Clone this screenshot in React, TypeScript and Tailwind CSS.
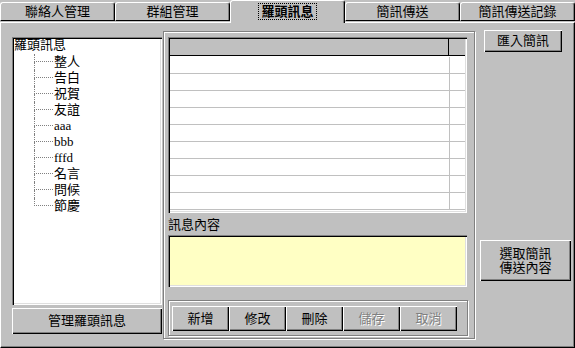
import React from 'react';

const raised = 'shadow-[inset_1px_1px_0_#fff,inset_-1px_-1px_0_#000,inset_-2px_-2px_0_#808080]';
const sunken = 'shadow-[inset_1px_1px_0_#808080,inset_2px_2px_0_#000,inset_-1px_-1px_0_#fff,inset_-2px_-2px_0_#dfdfdf]';
const etched = 'border border-[#808080] shadow-[inset_1px_1px_0_#fff,1px_1px_0_#fff]';

const tabs = ['聯絡人管理', '群組管理', '羅頭訊息', '簡訊傳送', '簡訊傳送記錄'];
const treeItems = ['整人', '告白', '祝賀', '友誼', 'aaa', 'bbb', 'fffd', '名言', '問候', '節慶'];
const actions = [
    { label: '新增', disabled: false },
    { label: '修改', disabled: false },
    { label: '刪除', disabled: false },
    { label: '儲存', disabled: true },
    { label: '取消', disabled: true },
];

const Tab = ({ label, active }: { label: string; active: boolean }) =>
    active ? (
        <div className="relative z-10 flex h-[23px] w-[115px] items-start justify-center rounded-t-[3px] border-t border-l border-r border-white border-r-black bg-[#c0c0c0] pt-[3px] shadow-[inset_-1px_0_0_#808080]">
            <span className="px-[2px] font-bold leading-[15px] outline-1 outline-dotted outline-black">{label}</span>
        </div>
    ) : (
        <div className="mt-[2px] flex h-[19px] w-[115px] items-center justify-center rounded-t-[3px] border border-white border-r-black border-b-black shadow-[inset_-1px_0_0_#808080]">
            {label}
        </div>
    );

const TreeRow = ({ label, last }: { label: string; last: boolean }) => (
    <div className="flex h-4 items-center">
        <div className="ml-[20px] flex w-[19px] flex-col self-stretch">
            <div className="h-[8px] border-b border-l border-dotted border-[#808080]" />
            <div className={last ? 'flex-1' : 'flex-1 border-l border-dotted border-[#808080]'} />
        </div>
        <span className="pl-[1px] leading-4">{label}</span>
    </div>
);

export default function App() {
    return (
        <div className="h-[348px] w-[575px] overflow-hidden bg-[#c0c0c0] font-['Liberation_Serif','Noto_Sans_CJK_TC',serif] text-[13px] text-black">
            {/* tab strip */}
            <div className="flex h-[22px] items-start">
                {tabs.map((t, i) => (
                    <Tab key={t} label={t} active={i === 2} />
                ))}
            </div>

            {/* page */}
            <div className="flex h-[326px] items-start border-t border-l border-r border-b border-white border-r-black border-b-black pl-[11px] shadow-[inset_-1px_-1px_0_#808080]">
                {/* tree column */}
                <div className="mt-[14px] flex w-[150px] flex-col">
                    <div className={`h-[268px] bg-white px-[2px] pt-[1px] ${sunken}`}>
                        <div className="h-[14px] leading-[14px]">羅頭訊息</div>
                        <div className="mt-[2px]">
                            {treeItems.map((t, i) => (
                                <TreeRow key={t} label={t} last={i === treeItems.length - 1} />
                            ))}
                        </div>
                    </div>
                    <button className={`mt-[3px] h-[26px] w-[150px] bg-[#c0c0c0] ${raised}`}>管理羅頭訊息</button>
                </div>

                {/* message column */}
                <div className={`ml-[1px] mt-[8px] h-[308px] w-[312px] pl-[4px] pt-[5px] ${etched}`}>
                    <div className={`h-[176px] w-[299px] bg-white p-[2px] ${sunken}`}>
                        <div className="flex h-[17px] border-b border-black bg-[#c0c0c0]">
                            <div className="w-[279px] border-r border-black" />
                            <div className="flex-1" />
                        </div>
                        <div className="pt-px">
                            {Array.from({ length: 9 }).map((_, i) => (
                                <div key={i} className="flex h-[17px] border-b border-[#c0c0c0]">
                                    <div className="w-[280px] border-r border-[#c0c0c0]" />
                                    <div className="flex-1" />
                                </div>
                            ))}
                        </div>
                    </div>
                    <div className="mt-[4px] h-4 leading-4">訊息內容</div>
                    <div className={`mt-[2px] h-[52px] w-[299px] bg-[#ffffc4] ${sunken}`} />
                    <div className={`mt-[13px] flex h-[36px] w-[300px] pl-[3px] pt-[5px] ${etched}`}>
                        {actions.map((a) => (
                            <button
                                key={a.label}
                                className={`h-[25px] w-[57px] bg-[#c0c0c0] ${raised} ${a.disabled ? 'text-[#808080] [text-shadow:1px_1px_0_#fff]' : ''}`}
                            >
                                {a.label}
                            </button>
                        ))}
                    </div>
                </div>

                {/* right buttons */}
                <div className="flex w-[96px] flex-col">
                    <button className={`ml-[9px] mt-[7px] h-[22px] w-[78px] bg-[#c0c0c0] ${raised}`}>匯入簡訊</button>
                    <button className={`ml-[5px] mt-[188px] h-[41px] w-[91px] bg-[#c0c0c0] leading-[14px] ${raised}`}>
                        選取簡訊
                        <br />
                        傳送內容
                    </button>
                </div>
            </div>
        </div>
    );
}
